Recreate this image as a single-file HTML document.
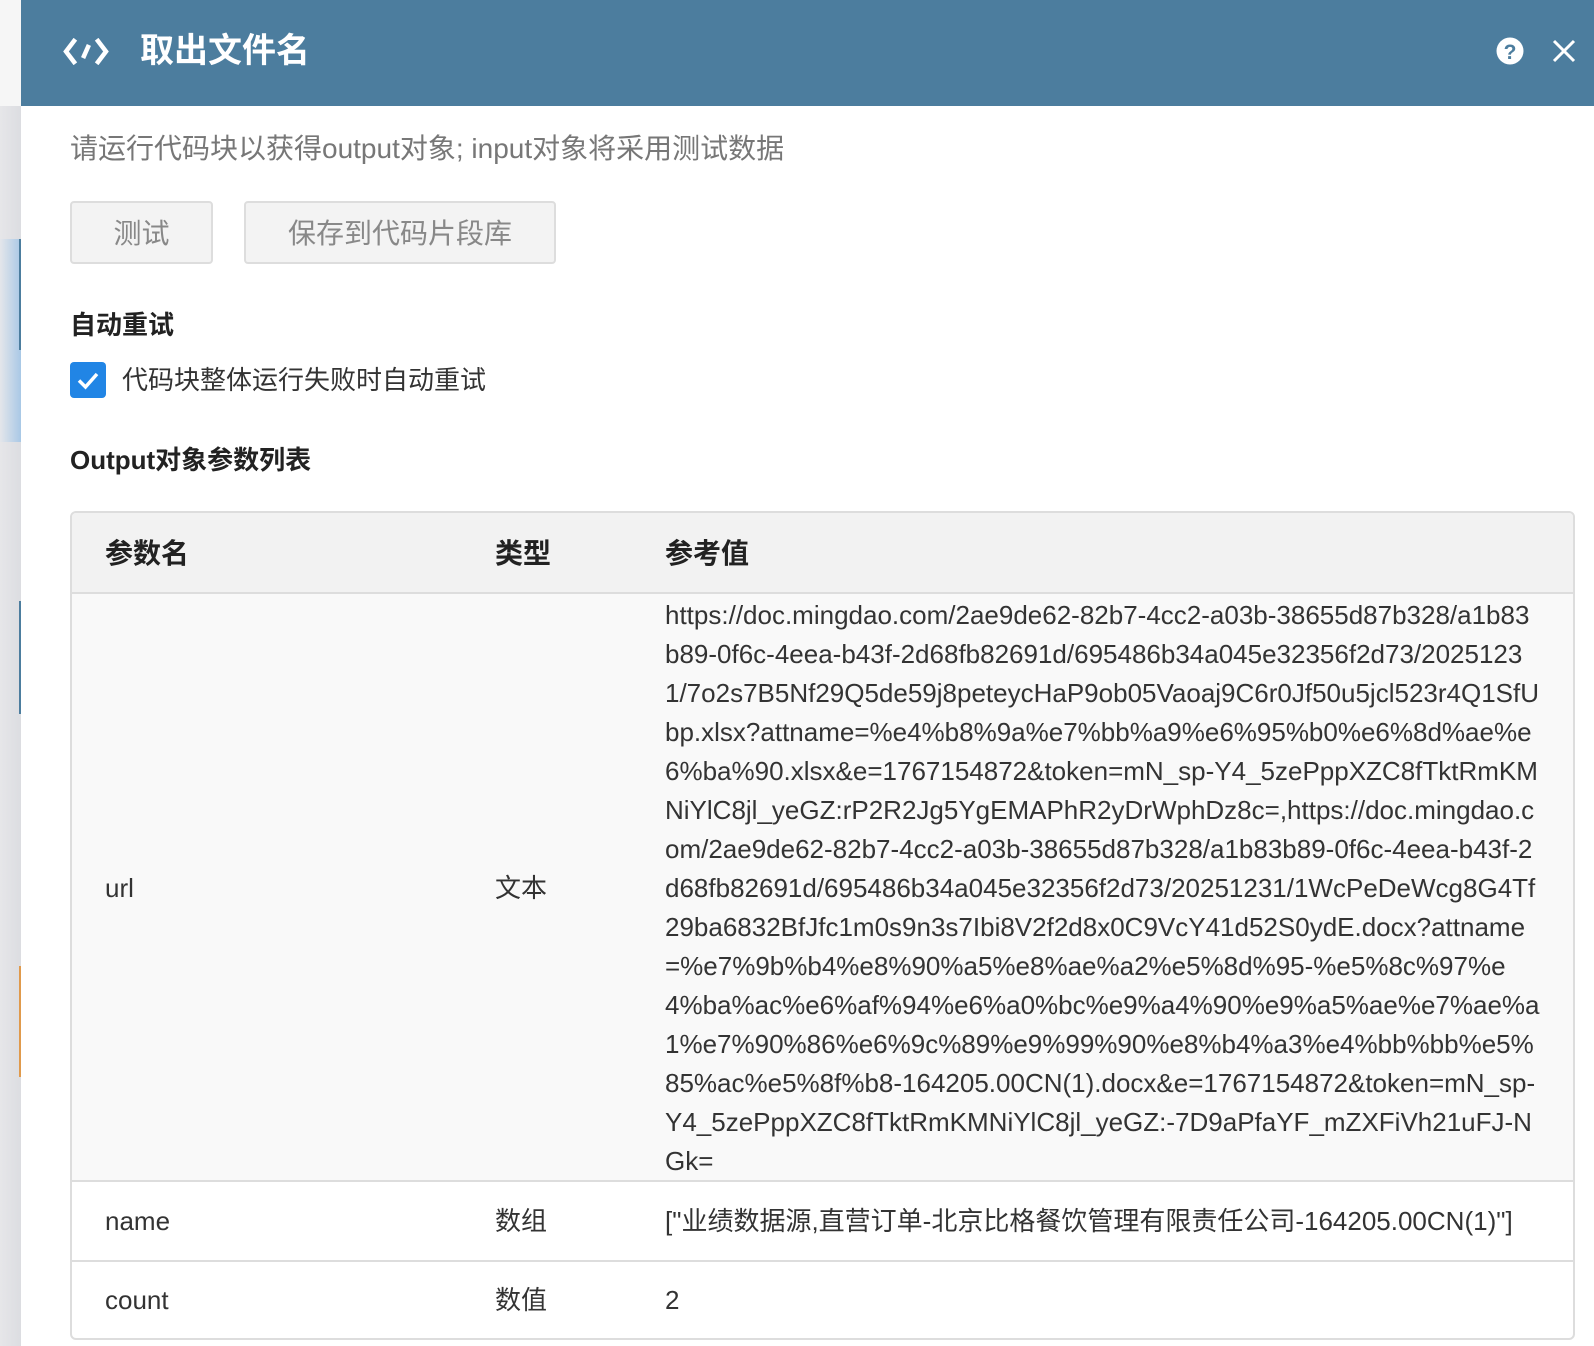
<!DOCTYPE html>
<html><head><meta charset="utf-8"><style>
*{margin:0;padding:0;box-sizing:border-box}
body{width:1594px;height:1346px;overflow:hidden;background:#fff;font-family:"Liberation Sans","Noto Sans CJK SC",sans-serif;position:relative}
.strip{position:absolute;left:0;top:0;width:21px;height:1346px;background:linear-gradient(90deg,#e6e6e9,#dcdde1)}
.striptop{position:absolute;left:0;top:0;width:21px;height:106px;background:#f6f6f6}
.panel{position:absolute;left:21px;top:0;width:1573px;height:1346px;background:#fff}
.hdr{position:absolute;left:0;top:0;width:1573px;height:106px;background:#4c7d9e}
.title{position:absolute;left:119px;top:28px;font-size:34px;font-weight:bold;color:#fff;line-height:46px}
.t{position:absolute;white-space:nowrap}
.btn{position:absolute;top:201px;height:63px;background:#f3f3f3;border:2px solid #ddd;border-radius:4px;font-size:28px;color:#888;text-align:center;line-height:61px}
.tbl{position:absolute;left:49px;top:511px;width:1505px;height:829px;border:2px solid #ddd;border-radius:6px;overflow:hidden}
.th{position:absolute;left:0;top:0;width:100%;height:81px;background:#f2f2f2;border-bottom:2px solid #ddd}
.r1{position:absolute;left:0;top:81px;width:100%;height:588px;background:#f9f9f9;border-bottom:2px solid #ddd}
.r2{position:absolute;left:0;top:669px;width:100%;height:80px;border-bottom:2px solid #ddd}
.h{font-size:28px;font-weight:bold;color:#222;top:19px}
.c{font-size:26px;color:#333}
.url div{height:39px;line-height:39px;font-size:26px;color:#333;white-space:nowrap}
</style></head><body>
<div class="strip"></div><div class="striptop"></div>
<div style="position:absolute;left:0;top:239px;width:21px;height:203px;background:linear-gradient(90deg,#e4e6ea,#a9c8e6)"></div>
<div style="position:absolute;left:19px;top:239px;width:2px;height:111px;background:#4c7d9e"></div>
<div style="position:absolute;left:19px;top:601px;width:2px;height:113px;background:#4c7d9e"></div>
<div style="position:absolute;left:19px;top:966px;width:2px;height:111px;background:#e09a4c"></div>
<div class="panel">
 <div class="hdr">
  <svg style="position:absolute;left:42px;top:38px" width="46" height="27" viewBox="0 0 46 27"><g fill="none" stroke="#fff" stroke-width="4.5" stroke-linecap="square"><path d="M11 3 L3 13.5 L11 24"/><path d="M35 3 L43 13.5 L35 24"/><path d="M25 9 L21 18"/></g></svg>
  <div class="title">取出文件名</div>
  <svg style="position:absolute;left:1475px;top:37px" width="28" height="28" viewBox="0 0 28 28"><circle cx="14" cy="14" r="13.5" fill="#fff"/><text x="14" y="22" text-anchor="middle" font-family="Liberation Sans" font-weight="bold" font-size="21" fill="#4c7d9e">?</text></svg>
  <svg style="position:absolute;left:1531px;top:39px" width="24" height="24" viewBox="0 0 24 24"><path d="M2 2L22 22M22 2L2 22" stroke="#fff" stroke-width="3"/></svg>
 </div>
 <div class="t" style="left:49px;top:130px;font-size:28px;color:#777;line-height:38px">请运行代码块以获得output对象; input对象将采用测试数据</div>
 <div class="btn" style="left:49px;width:143px">测试</div>
 <div class="btn" style="left:223px;width:312px">保存到代码片段库</div>
 <div class="t" style="left:49px;top:308px;font-size:26px;font-weight:bold;color:#222;line-height:34px">自动重试</div>
 <div style="position:absolute;left:49px;top:362px;width:36px;height:36px;background:#2185e5;border-radius:4px"><svg width="36" height="36" viewBox="0 0 36 36"><path d="M9 18.5 L15.5 25 L27 12" fill="none" stroke="#fff" stroke-width="3.5"/></svg></div>
 <div class="t" style="left:101px;top:361px;font-size:26px;color:#333;line-height:38px">代码块整体运行失败时自动重试</div>
 <div class="t" style="left:49px;top:443px;font-size:26px;font-weight:bold;color:#222;line-height:34px">Output对象参数列表</div>
 <div class="tbl">
  <div class="th"></div><div class="r1"></div><div class="r2"></div>
  <div class="t h" style="left:33px">参数名</div>
  <div class="t h" style="left:423px">类型</div>
  <div class="t h" style="left:593px">参考值</div>
  <div class="t c" style="left:33px;top:360px;line-height:30px">url</div>
  <div class="t c" style="left:423px;top:360px;line-height:30px">文本</div>
  <div class="t url" style="left:593px;top:83px">
<div>https://doc.mingdao.com/2ae9de62-82b7-4cc2-a03b-38655d87b328/a1b83</div>
<div>b89-0f6c-4eea-b43f-2d68fb82691d/695486b34a045e32356f2d73/2025123</div>
<div>1/7o2s7B5Nf29Q5de59j8peteycHaP9ob05Vaoaj9C6r0Jf50u5jcl523r4Q1SfU</div>
<div>bp.xlsx?attname=%e4%b8%9a%e7%bb%a9%e6%95%b0%e6%8d%ae%e</div>
<div>6%ba%90.xlsx&amp;e=1767154872&amp;token=mN_sp-Y4_5zePppXZC8fTktRmKM</div>
<div>NiYlC8jl_yeGZ:rP2R2Jg5YgEMAPhR2yDrWphDz8c=,https://doc.mingdao.c</div>
<div>om/2ae9de62-82b7-4cc2-a03b-38655d87b328/a1b83b89-0f6c-4eea-b43f-2</div>
<div>d68fb82691d/695486b34a045e32356f2d73/20251231/1WcPeDeWcg8G4Tf</div>
<div>29ba6832BfJfc1m0s9n3s7Ibi8V2f2d8x0C9VcY41d52S0ydE.docx?attname</div>
<div>=%e7%9b%b4%e8%90%a5%e8%ae%a2%e5%8d%95-%e5%8c%97%e</div>
<div>4%ba%ac%e6%af%94%e6%a0%bc%e9%a4%90%e9%a5%ae%e7%ae%a</div>
<div>1%e7%90%86%e6%9c%89%e9%99%90%e8%b4%a3%e4%bb%bb%e5%</div>
<div>85%ac%e5%8f%b8-164205.00CN(1).docx&amp;e=1767154872&amp;token=mN_sp-</div>
<div>Y4_5zePppXZC8fTktRmKMNiYlC8jl_yeGZ:-7D9aPfaYF_mZXFiVh21uFJ-N</div>
<div>Gk=</div>
  </div>
  <div class="t c" style="left:33px;top:693px;line-height:30px">name</div>
  <div class="t c" style="left:423px;top:693px;line-height:30px">数组</div>
  <div class="t c" style="left:593px;top:693px;line-height:30px">["业绩数据源,直营订单-北京比格餐饮管理有限责任公司-164205.00CN(1)"]</div>
  <div class="t c" style="left:33px;top:772px;line-height:30px">count</div>
  <div class="t c" style="left:423px;top:772px;line-height:30px">数值</div>
  <div class="t c" style="left:593px;top:772px;line-height:30px">2</div>
 </div>
</div>
</body></html>
